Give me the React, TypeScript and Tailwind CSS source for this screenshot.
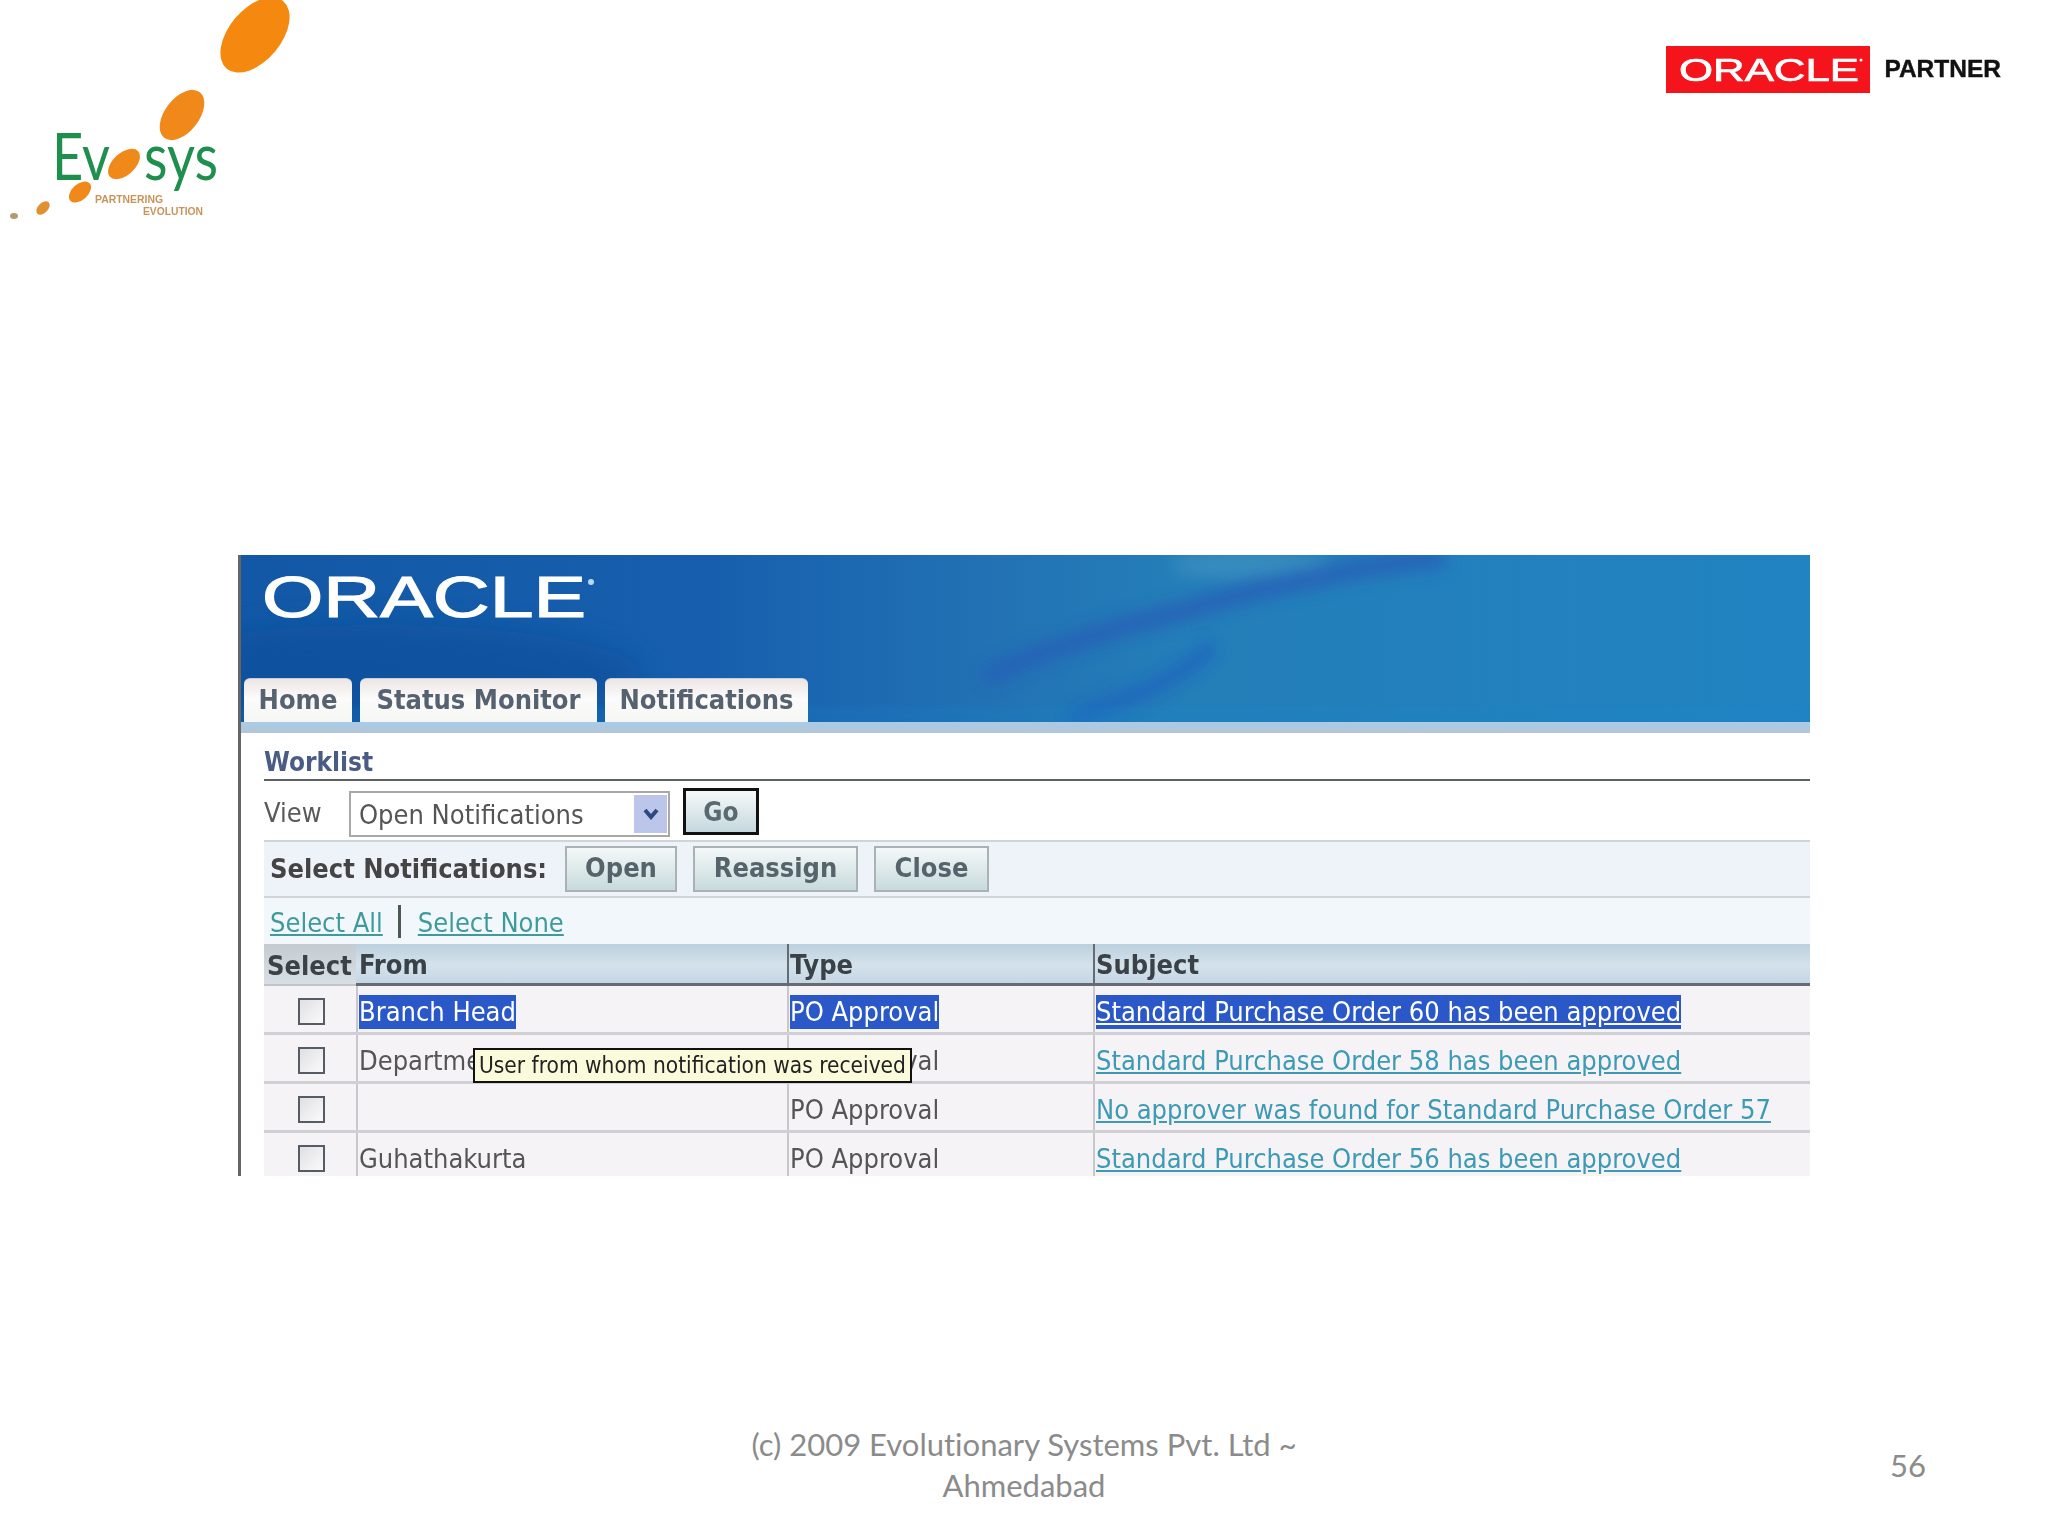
const rows = [
  { from: 'Branch Head', type: 'PO Approval', subject: 'Standard Purchase Order 60 has been approved', active: true },
  { from: 'Department Head', type: 'PO Approval', subject: 'Standard Purchase Order 58 has been approved', active: false },
  { from: '', type: 'PO Approval', subject: 'No approver was found for Standard Purchase Order 57', active: false },
  { from: 'Guhathakurta', type: 'PO Approval', subject: 'Standard Purchase Order 56 has been approved', active: false },
];

const EvosysLogo = () => (
  <svg className="blur-[0.7px]" width="290" height="224" viewBox="0 0 290 224">
    <ellipse cx="255" cy="35" rx="44" ry="26" transform="rotate(-50 255 35)" fill="#f5890f" />
    <ellipse cx="182" cy="115" rx="29" ry="17" transform="rotate(-52 182 115)" fill="#f0881a" />
    <ellipse cx="124" cy="164" rx="19" ry="11" transform="rotate(-42 124 164)" fill="#f0881a" />
    <ellipse cx="80" cy="192" rx="13" ry="8" transform="rotate(-42 80 192)" fill="#f0881a" />
    <ellipse cx="43" cy="208" rx="8" ry="5" transform="rotate(-45 43 208)" fill="#e09030" />
    <ellipse cx="14" cy="216" rx="4" ry="3" fill="#b09a70" />
    <text x="52" y="180" fontFamily="Lato, sans-serif" fontSize="66" fill="#1f8f4e" textLength="58" lengthAdjust="spacingAndGlyphs">Ev</text>
    <text x="144" y="180" fontFamily="Lato, sans-serif" fontSize="66" fill="#1f8f4e" textLength="74" lengthAdjust="spacingAndGlyphs">sys</text>
    <text x="95" y="203" fontFamily="Liberation Sans, sans-serif" fontWeight="700" fontSize="10" fill="#c8945a" textLength="68" lengthAdjust="spacingAndGlyphs">PARTNERING</text>
    <text x="143" y="215" fontFamily="Liberation Sans, sans-serif" fontWeight="700" fontSize="10" fill="#c8945a" textLength="60" lengthAdjust="spacingAndGlyphs">EVOLUTION</text>
  </svg>
);

const PartnerLogo = () => (
  <div className="flex items-center gap-[14px]">
    <div className="w-[204px] h-[47px] bg-[#f5141c] flex items-center justify-center blur-[0.4px]">
      <svg width="194" height="42" viewBox="0 0 194 42">
        <text x="8" y="32" textLength="180" lengthAdjust="spacingAndGlyphs" fontFamily="Liberation Sans, sans-serif" fontSize="32" fill="#fff" stroke="#fff" strokeWidth="0.7">ORACLE</text>
        <circle cx="190" cy="11" r="1.5" fill="#fff" />
      </svg>
    </div>
    <span className="text-[24.5px] font-bold text-[#111] [font-family:'Liberation_Sans',sans-serif] [-webkit-text-stroke:0.4px_#111] blur-[0.3px]">PARTNER</span>
  </div>
);

const Swoosh = () => (
  <svg className="absolute inset-0" width="1569" height="167" viewBox="0 0 1569 167">
    <defs>
      <filter id="soft" x="-20%" y="-60%" width="140%" height="220%">
        <feGaussianBlur stdDeviation="8" />
      </filter>
      <filter id="softer" x="-20%" y="-60%" width="140%" height="220%">
        <feGaussianBlur stdDeviation="14" />
      </filter>
    </defs>
    <ellipse cx="1010" cy="10" rx="80" ry="16" fill="#4f9cc4" opacity="0.45" filter="url(#soft)" />
    <ellipse cx="140" cy="120" rx="260" ry="50" fill="#0b4f9c" opacity="0.7" filter="url(#softer)" />
    <path d="M744 123 C790 100 810 95 836 87 C880 70 910 65 953 53 C1000 38 1040 30 1075 23 C1120 12 1170 6 1204 3" stroke="#2560b8" strokeWidth="20" fill="none" opacity="0.85" filter="url(#soft)" />
    <path d="M830 165 C860 150 885 145 910 133 C940 118 960 105 971 90" stroke="#1c62c0" strokeWidth="15" fill="none" opacity="0.8" filter="url(#soft)" />
    <rect x="0" y="156" width="1569" height="11" fill="#1488cc" opacity="0.35" filter="url(#soft)" />
  </svg>
);

const Tab = ({ label, className }: { label: string; className: string }) => (
  <div className={`h-[44px] rounded-t-[6px] border-t border-[#c8ced8] bg-[linear-gradient(#ece6e4,#fbfbfb_45%,#f6f6f4)] flex items-center justify-center text-[27px] font-bold text-[#566270] ${className}`}>
    {label}
  </div>
);

const ActionButton = ({ label, className }: { label: string; className: string }) => (
  <button className={`h-[46px] border-2 border-[#a9b3b6] bg-[linear-gradient(#f4f8f8,#c8dadc)] pb-[3px] text-[27px] leading-none font-bold text-[#56636a] ${className}`}>
    {label}
  </button>
);

const cell = 'h-full border-l-2 border-[#c8c8cc] pl-[1px] pt-[6px] flex items-center';

const App = () => (
  <div className="relative w-[2048px] h-[1536px] bg-white overflow-hidden [font-family:'DejaVu_Sans','Liberation_Sans',sans-serif] font-stretch-condensed">
    <div className="h-[555px] flex items-start justify-between pr-[47px]">
      <EvosysLogo />
      <div className="mt-[46px]">
        <PartnerLogo />
      </div>
    </div>

    <div className="ml-[238px] w-[1572px] h-[621px] border-l-[3px] border-[#666] overflow-hidden blur-[0.6px]">
      <div className="relative h-[167px] bg-[linear-gradient(90deg,#1258a6,#175fae_30%,#2272b4_48%,#247eb8_60%,#2183c2)]">
        <Swoosh />
        <div className="relative h-full flex flex-col justify-between">
          <svg className="mt-[9px] ml-[21px]" width="345" height="70" viewBox="0 0 345 70">
            <text x="0" y="53" textLength="324" lengthAdjust="spacingAndGlyphs" fontFamily="Liberation Sans, sans-serif" fontSize="58" fill="#fff" stroke="#fff" strokeWidth="1.2">ORACLE</text>
            <circle cx="329" cy="18" r="3" fill="#b8d8f0" />
          </svg>
          <div className="flex gap-[8px] pl-[3px]">
            <Tab label="Home" className="w-[108px]" />
            <Tab label="Status Monitor" className="w-[237px]" />
            <Tab label="Notifications" className="w-[203px]" />
          </div>
        </div>
      </div>
      <div className="h-[11px] bg-[linear-gradient(#a8cbe8,#b4c6d6)]" />

      <div className="pl-[23px]">
        <div className="h-[48px] border-b-2 border-[#5c6264] flex items-end pb-[4px] text-[26px] leading-none font-bold text-[#4a5c84]">Worklist</div>

        <div className="h-[59px] flex items-center pt-[2px]">
          <span className="w-[85px] text-[27px] text-[#5a5a5a] pt-[3px]">View</span>
          <div className="w-[321px] h-[46px] border-2 border-[#a8a8a8] flex items-center justify-between pl-[8px] pr-[1px] mt-[4px] text-[27px] text-[#555]">
            <span className="pt-[3px]">Open Notifications</span>
            <span className="w-[33px] h-[38px] bg-[#bcc6ea] flex items-center justify-center">
              <svg width="18" height="12" viewBox="0 0 18 12">
                <path d="M3 2 L9 9 L15 2" stroke="#2c4a80" strokeWidth="4" fill="none" />
              </svg>
            </span>
          </div>
          <button className="w-[76px] h-[47px] ml-[13px] border-[3px] border-[#111] bg-[linear-gradient(#f6f9fa,#c4d8de)] text-[26px] leading-none font-bold text-[#5a6a70]">Go</button>
        </div>

        <div className="h-[58px] border-t-2 border-b-2 border-[#d0d4d8] bg-[#eef3fa] flex items-center pl-[6px]">
          <span className="w-[295px] text-[27px] font-bold text-[#444]">Select Notifications:</span>
          <ActionButton label="Open" className="w-[112px]" />
          <ActionButton label="Reassign" className="w-[165px] ml-[16px]" />
          <ActionButton label="Close" className="w-[115px] ml-[16px]" />
        </div>

        <div className="h-[46px] bg-[#f2f7fc] flex items-center pl-[6px] text-[27px] text-[#3f9a9c]">
          <span className="underline pt-[5px]">Select All</span>
          <span className="w-[3px] h-[33px] bg-[#4a5a50] ml-[15px] mr-[17px]" />
          <span className="underline pt-[5px]">Select None</span>
        </div>

        <div className="h-[42px] grid grid-cols-[92px_431px_306px_1fr] text-[27px] leading-none font-bold text-[#3a4248] bg-[linear-gradient(#bcd0de,#d4e2ec_50%,#c2d4e2)]">
          <div className="flex items-center pl-[3px] pt-[2px] bg-[linear-gradient(#c4ccd2,#d8dfe4)] border-b-2 border-[#c0c4c8]">Select</div>
          <div className="border-b-[3px] border-[#666c72] flex items-center pl-[3px] pt-[2px]">From</div>
          <div className="border-b-[3px] border-l-2 border-[#666c72] flex items-center pl-[1px] pt-[2px]">Type</div>
          <div className="border-b-[3px] border-l-2 border-[#666c72] flex items-center pl-[1px] pt-[2px]">Subject</div>
        </div>

        {rows.map((r) => (
          <div key={r.subject} className="h-[49px] grid grid-cols-[92px_431px_306px_1fr] bg-[#f5f3f6] border-b-[3px] border-[#d0d0d4] text-[27px] leading-[34px] text-[#555]">
            <div className="h-full flex items-center justify-center pl-[3px] pt-[4px]">
              <span className="w-[27px] h-[27px] border-2 border-[#555c66] bg-[linear-gradient(135deg,#e0e0e4,#fafafa)]" />
            </div>
            <div className={cell}>{r.active ? <span className="bg-[#2a58c8] text-white">{r.from}</span> : r.from}</div>
            <div className={cell}>{r.active ? <span className="bg-[#2a58c8] text-white">{r.type}</span> : r.type}</div>
            <div className={cell}>
              <span className={r.active ? 'bg-[#2a58c8] text-white underline' : 'underline text-[#3c9ab4]'}>{r.subject}</span>
            </div>
          </div>
        ))}
      </div>
    </div>

    <div className="flex items-center mt-[248px]">
      <div className="ml-[734px] w-[580px] text-center text-[31px] leading-[41px] text-[#8b8b8b] [font-family:Lato,sans-serif] font-stretch-normal [font-variant-ligatures:none]">
        (c) 2009 Evolutionary Systems Pvt. Ltd ~
        <br />
        Ahmedabad
      </div>
      <span className="ml-[576px] text-[31px] text-[#8b8b8b] [font-family:Lato,sans-serif] font-stretch-normal">56</span>
    </div>

    <div className="absolute left-[473px] top-[1048px] w-[439px] h-[35px] border-2 border-[#111] bg-[#fbfbdc] flex items-center pl-[4px] text-[22.5px] text-[#222] whitespace-nowrap blur-[0.3px]">
      User from whom notification was received
    </div>
  </div>
);

export default App;
